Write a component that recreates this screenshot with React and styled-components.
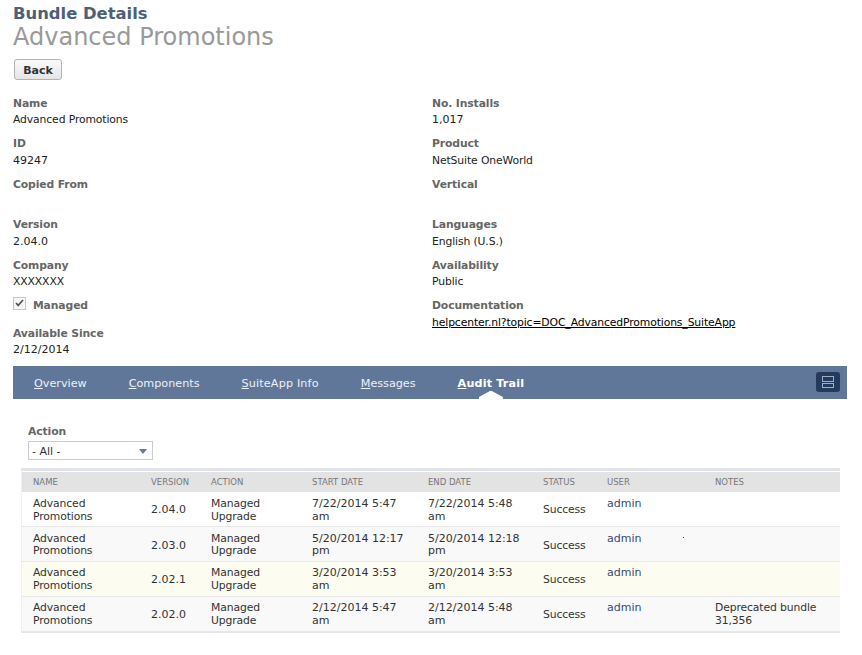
import React from 'react';
import styled, { createGlobalStyle } from 'styled-components';

const GlobalStyle = createGlobalStyle`
    html, body {
        margin: 0;
        padding: 0;
        background: #fff;
    }
    body {
        font-family: "DejaVu Sans", Verdana, sans-serif;
        font-size: 10.8px;
        letter-spacing: -0.12px;
        color: #222;
    }
`;

const Page = styled.div`
    width: 862px;
    height: 655px;
    overflow: hidden;
    padding: 5px 15px 0 13px;
    box-sizing: border-box;
`;

const Title = styled.h1`
    margin: 0;
    font-size: 16.4px;
    line-height: 18px;
    font-weight: 700;
    letter-spacing: 0;
    color: #4d5f7a;
`;

const SubTitle = styled.h2`
    margin: 0;
    font-size: 24px;
    line-height: 28px;
    font-weight: 400;
    letter-spacing: 0;
    color: #999;
`;

const BackButton = styled.button`
    display: block;
    margin: 8px 0 0 1px;
    width: 48px;
    height: 21px;
    padding: 1px 0 0;
    border: 1px solid #b2b2b2;
    border-radius: 3px;
    background: linear-gradient(#fafafa, #e5e5e5);
    font-family: inherit;
    font-size: 11px;
    font-weight: 700;
    color: #333;
`;

const Details = styled.div`
    display: grid;
    grid-template-columns: 419px 1fr;
    margin-top: 15.9px;
`;

const Column = styled.div`
    display: flex;
    flex-direction: column;
`;

const Field = styled.div`
    height: 40.5px;
`;

const Label = styled.div`
    font-weight: 700;
    line-height: 16px;
    color: #666;
`;

const Value = styled.div`
    margin-top: 0.3px;
    line-height: 16px;
    color: #222;
    ${p => p.$num && 'font-size: 11px; letter-spacing: 0;'}
`;

const DocLink = styled.a`
    color: #000;
    text-decoration: underline;
`;

const CheckRow = styled.div`
    display: flex;
    align-items: flex-start;
    gap: 7px;
    height: 27.5px;
`;

const CheckBox = styled.span`
    display: flex;
    align-items: flex-start;
    justify-content: flex-start;
    box-sizing: border-box;
    width: 13px;
    height: 13px;
    padding: 1px 0 0 1px;
    border: 1px solid #c8c8c8;
    background: #f8f8f8;
    margin-top: -1px;
`;

const TabBar = styled.nav`
    display: flex;
    align-items: center;
    box-sizing: border-box;
    height: 33px;
    margin-top: -0.4px;
    padding: 2px 7px 0 21px;
    background: #607799;
`;

const Tab = styled.a`
    position: relative;
    margin-right: 42px;
    font-size: 11.2px;
    letter-spacing: ${p => (p.$wide ? '0.16px' : '0')};
    color: ${p => (p.$active ? '#fff' : '#eef1f5')};
    font-weight: ${p => (p.$active ? 700 : 400)};
    text-decoration: none;

    u {
        text-decoration: underline;
    }

    ${p => p.$active && `
        &::after {
            content: '';
            position: absolute;
            left: 50%;
            bottom: -9.5px;
            margin-left: -12px;
            width: 24px;
            height: 9px;
            background: #fff;
            clip-path: polygon(50% 0, 100% 72%, 100% 100%, 0 100%, 0 72%);
        }
    `}
`;

const ViewToggle = styled.button`
    margin: -3px 0 0 auto;
    display: flex;
    align-items: center;
    justify-content: center;
    width: 24px;
    height: 20px;
    padding: 0;
    border: 0;
    border-radius: 3px;
    background: #243a5e;
`;

const FilterBlock = styled.div`
    padding: 25px 0 0 15px;
`;

const SelectBox = styled.div`
    display: flex;
    align-items: center;
    justify-content: space-between;
    box-sizing: border-box;
    width: 125px;
    height: 19px;
    margin-top: 1px;
    padding: 1px 5px 0 3px;
    border: 1px solid #c8ccd2;
    font-size: 11px;
    letter-spacing: 0;
    color: #333;
`;

const Caret = styled.span`
    border-left: 4px solid transparent;
    border-right: 4px solid transparent;
    border-top: 5px solid #5f7ba8;
`;

const TableWrap = styled.div`
    margin: 8px 7px 0 8px;
    border-top: 3px solid #e0e4ea;
    border-bottom: 1px solid #e6e6e6;
    border-left: 1px solid #f0f0f0;
`;

const Table = styled.table`
    width: 100%;
    border-collapse: collapse;
    table-layout: fixed;
`;

const Th = styled.th`
    box-sizing: border-box;
    height: 20px;
    padding: 1px 0 0 11px;
    background: #e3e3e3;
    border-top: 1px solid #fff;
    font-size: 8.5px;
    line-height: 12px;
    font-weight: 400;
    letter-spacing: 0;
    text-align: left;
    text-transform: uppercase;
    color: #777;
    width: ${p => p.$w}px;
`;

const Row = styled.tr`
    height: 35px;
    line-height: ${p => p.$lh}px;
    background: ${p => p.$bg};
    border-bottom: 1px solid #e8e8e8;
`;

const Td = styled.td`
    padding: ${p => p.$pad}px 8px 0 11px;
    box-sizing: border-box;
    vertical-align: ${p => (p.$middle ? 'middle' : 'top')};
    color: #333;
    position: relative;
    ${p => p.$num && 'font-size: 11px; letter-spacing: 0;'}
`;

const UserLink = styled.a`
    color: #34497a;
    font-size: 11px;
    letter-spacing: 0;
`;

const Speck = styled.span`
    position: absolute;
    left: 87px;
    top: 10px;
    width: 1px;
    height: 1px;
    background: #34497a;
`;

const leftFields = [
    ['Name', 'Advanced Promotions'],
    ['ID', '49247', true],
    ['Copied From', ''],
    ['Version', '2.04.0', true],
    ['Company', 'XXXXXXX'],
];

const rightFields = [
    ['No. Installs', '1,017', true],
    ['Product', 'NetSuite OneWorld'],
    ['Vertical', ''],
    ['Languages', 'English (U.S.)'],
    ['Availability', 'Public'],
];

const columns = [
    ['Name', 118], ['Version', 60], ['Action', 101], ['Start Date', 116],
    ['End Date', 115], ['Status', 64], ['User', 108], ['Notes', 136],
];

const rows = [
    { version: '2.04.0', start: '7/22/2014 5:47 am', end: '7/22/2014 5:48 am', bg: '#fff', lh: 13, pad: 5, mid: 1 },
    { version: '2.03.0', start: '5/20/2014 12:17 pm', end: '5/20/2014 12:18 pm', bg: '#f9f9f9', lh: 12, pad: 6, mid: 3, speck: true },
    { version: '2.02.1', start: '3/20/2014 3:53 am', end: '3/20/2014 3:53 am', bg: '#fcfdf0', lh: 13, pad: 4, mid: 1 },
    { version: '2.02.0', start: '2/12/2014 5:47 am', end: '2/12/2014 5:48 am', bg: '#f9f9f9', lh: 13, pad: 4, mid: 0, notes: 'Deprecated bundle 31,356' },
];

const tabs = [
    ['O', 'verview'],
    ['C', 'omponents'],
    ['S', 'uiteApp Info', true],
    ['M', 'essages'],
];

function App() {
    return (
        <Page>
            <GlobalStyle />
            <Title>Bundle Details</Title>
            <SubTitle>Advanced Promotions</SubTitle>
            <BackButton>Back</BackButton>
            <Details>
                <Column>
                    {leftFields.map(f => (
                        <Field key={f[0]}>
                            <Label>{f[0]}</Label>
                            <Value $num={f[2]}>{f[1]}</Value>
                        </Field>
                    ))}
                    <CheckRow>
                        <CheckBox>
                            <svg width="9" height="8" viewBox="0 0 9 8">
                                <path d="M1 4l2.2 2.4L8 1" fill="none" stroke="#555" strokeWidth="1.7" />
                            </svg>
                        </CheckBox>
                        <Label>Managed</Label>
                    </CheckRow>
                    <Field>
                        <Label>Available Since</Label>
                        <Value $num>2/12/2014</Value>
                    </Field>
                </Column>
                <Column>
                    {rightFields.map(f => (
                        <Field key={f[0]}>
                            <Label>{f[0]}</Label>
                            <Value $num={f[2]}>{f[1]}</Value>
                        </Field>
                    ))}
                    <Field>
                        <Label>Documentation</Label>
                        <Value><DocLink>helpcenter.nl?topic=DOC_AdvancedPromotions_SuiteApp</DocLink></Value>
                    </Field>
                </Column>
            </Details>
            <TabBar>
                {tabs.map(t => (
                    <Tab key={t[0]} $wide={t[2]}><u>{t[0]}</u>{t[1]}</Tab>
                ))}
                <Tab $active $wide><u>A</u>udit Trail</Tab>
                <ViewToggle>
                    <svg width="14" height="14" viewBox="0 0 14 14">
                        <rect x="1.5" y="1.5" width="11" height="5" fill="none" stroke="#a3adbf" />
                        <rect x="1.5" y="8.5" width="11" height="4" fill="none" stroke="#a3adbf" />
                    </svg>
                </ViewToggle>
            </TabBar>
            <FilterBlock>
                <Label>Action</Label>
                <SelectBox>- All -<Caret /></SelectBox>
            </FilterBlock>
            <TableWrap>
                <Table>
                    <thead>
                        <tr>
                            {columns.map(c => <Th key={c[0]} $w={c[1]}>{c[0]}</Th>)}
                        </tr>
                    </thead>
                    <tbody>
                        {rows.map(r => (
                            <Row key={r.version} $bg={r.bg} $lh={r.lh}>
                                <Td $pad={r.pad}>Advanced Promotions</Td>
                                <Td $pad={r.mid} $middle $num>{r.version}</Td>
                                <Td $pad={r.pad}>Managed Upgrade</Td>
                                <Td $pad={r.pad} $num>{r.start}</Td>
                                <Td $pad={r.pad} $num>{r.end}</Td>
                                <Td $pad={r.mid} $middle>Success</Td>
                                <Td $pad={r.pad}>
                                    <UserLink>admin</UserLink>
                                    {r.speck && <Speck />}
                                </Td>
                                <Td $pad={r.pad}>{r.notes}</Td>
                            </Row>
                        ))}
                    </tbody>
                </Table>
            </TableWrap>
        </Page>
    );
}

export default App;
